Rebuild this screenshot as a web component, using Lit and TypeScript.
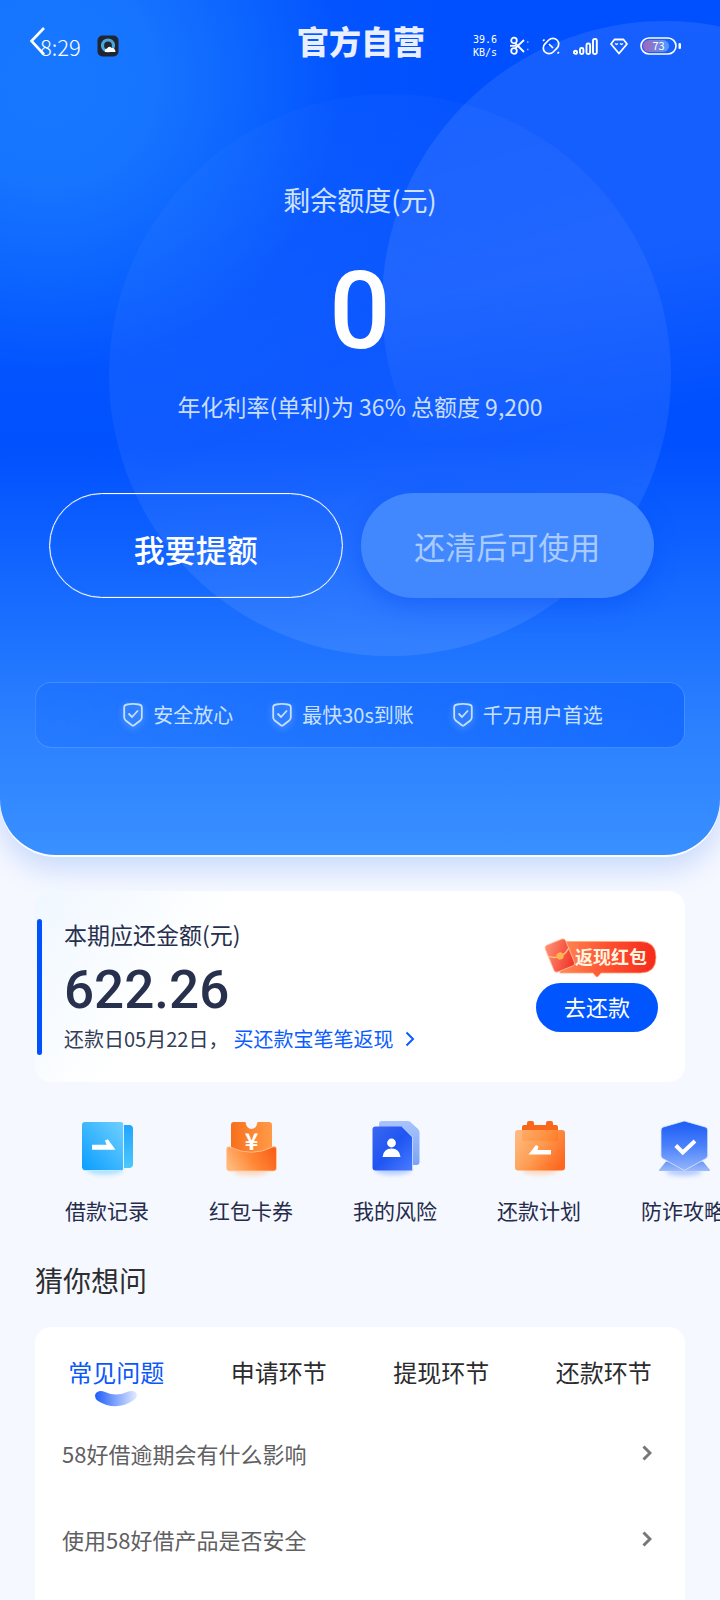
import { LitElement, html, svg, css, nothing } from "lit";
import { customElement, state } from "lit/decorators.js";

const shieldIcon = html`<svg class="shield" viewBox="0 0 20 24" aria-hidden="true">
  <path d="M4 1.500Q10 .4 16 1.500q2.800.4 2.800 2.800v10q0 2-1.500 3.200l-6.200 4.800q-1.100.8-2.200 0l-6.200-4.800Q1.200 16.300 1.200 14.300v-10Q1.200 1.900 4 1.500z"
    fill="none" stroke="#c4e0ff" stroke-width="1.800" />
  <path d="M5.500 10.500l3.500 3.500 6-6.500" fill="none" stroke="#c4e0ff" stroke-width="1.800" />
</svg>`;

const chevron = (cls: string) => html`<svg class=${cls} viewBox="0 0 10 16" aria-hidden="true">
  <path d="M1.500 1.500L8 8l-6.500 6.500" fill="none" stroke="currentColor" />
</svg>`;

const recordIcon = svg`
  <defs>
    <linearGradient id="g" x1="1" y1="0" x2="0" y2="1"><stop offset="0" stop-color="#6fd0ff"/><stop offset="1" stop-color="#0a9dff"/></linearGradient>
    <linearGradient id="h" x1="0" y1="0" x2="0" y2="1"><stop offset="0" stop-color="#22a4ff"/><stop offset="1" stop-color="#4cc8f8"/></linearGradient>
  </defs>
  <ellipse class="glow" cx="28" cy="54" rx="18" ry="5" fill="#7fd0ff"/>
  <rect x="40" y="9" width="16" height="43" rx="4" fill="url(#h)"/>
  <rect x="5" y="6" width="41.500" height="48.500" rx="3" fill="url(#g)"/>
  <path d="M46.500 8v45" stroke="#d8f2ff" stroke-width="1"/>
  <path d="M5 52q0 2.500 3 2.500h36" fill="none" stroke="#d8f2ff" stroke-width=".8"/>
  <path d="M15 28.700h14.700l-1.800-4.200 3-1.200L38.500 33.700H15z" fill="#fff"/>`;

const couponIcon = svg`
  <defs>
    <linearGradient id="g" x1="0" y1="0" x2="1" y2="0"><stop offset="0" stop-color="#f8701c"/><stop offset="1" stop-color="#ff9a48"/></linearGradient>
    <linearGradient id="h" x1="0" y1="0.600" x2="1" y2="0.300"><stop offset="0" stop-color="#ffb878"/><stop offset=".5" stop-color="#ff8634"/><stop offset="1" stop-color="#f9601a"/></linearGradient>
  </defs>
  <ellipse class="glow" cx="30" cy="55" rx="18" ry="4.500" fill="#ffc39a"/>
  <path d="M13 6h11.500q1 7 6 7t6-7H48q3 0 3 3v36H10V9q0-3 3-3z" fill="url(#g)"/>
  <text class="yen" x="30.500" y="34" text-anchor="middle">¥</text>
  <path d="M5.500 33q0-3 3-2.200 22 11 43.500 0 3.500-1 3.500 2v19.200q0 3-3 3h-44q-3 0-3-3z" fill="url(#h)" stroke="#ffd2ae" stroke-width=".7"/>`;

const riskIcon = svg`
  <defs>
    <linearGradient id="g" x1="0" y1="0" x2="1" y2="1"><stop offset="0" stop-color="#3c67f0"/><stop offset=".5" stop-color="#1f55f2"/><stop offset="1" stop-color="#4a7cff"/></linearGradient>
    <linearGradient id="h" x1="0" y1="0" x2="0" y2="1"><stop offset="0" stop-color="#a9c3fb"/><stop offset="1" stop-color="#7ba4f6"/></linearGradient>
  </defs>
  <ellipse class="glow" cx="28" cy="54" rx="18" ry="5" fill="#8fb0ff"/>
  <path d="M17 5h25.500q2 0 3.500 1.400l7 6.600q1.500 1.500 1.500 3.500v29.500q0 3-3 3H17q-3 0-3-3V8q0-3 3-3z" fill="url(#h)"/>
  <path d="M10.500 10.500H37L47.500 21v33.500h-37q-3 0-3-3v-38q0-3 3-3z" fill="url(#g)"/>
  <path d="M37 10.500L47.500 21v33" fill="none" stroke="#c9dafc" stroke-width=".9"/>
  <circle cx="26.500" cy="27" r="4.400" fill="#fff"/>
  <path d="M17.500 41q1-8.500 9-8.500t9 8.500z" fill="#fff"/>`;

const planIcon = svg`
  <defs>
    <linearGradient id="g" x1="0" y1="0.200" x2="1" y2="0.700"><stop offset="0" stop-color="#ffb473"/><stop offset=".5" stop-color="#ff9240"/><stop offset="1" stop-color="#ff5c0c"/></linearGradient>
  </defs>
  <ellipse class="glow" cx="31" cy="54" rx="18" ry="5" fill="#ffc39a"/>
  <path d="M15 9h3V7q0-2 2-2h3q2 0 2 2v2h12V7q0-2 2-2h3q2 0 2 2v2h3q2 0 2 2v14H13V11q0-2 2-2z" fill="#f9671c"/>
  <rect x="6" y="14" width="50" height="40.500" rx="3" fill="url(#g)" fill-opacity=".92"/>
  <path d="M19.500 38.500l7.500-9.500 2.500 1.500-1 3.500H42v4.500z" fill="#fff"/>`;

const guardIcon = svg`
  <defs>
    <linearGradient id="g" x1="0" y1="0" x2="0" y2="1"><stop offset="0" stop-color="#1b5cf5"/><stop offset=".5" stop-color="#4a80fb"/><stop offset="1" stop-color="#93b6fb"/></linearGradient>
    <linearGradient id="h" x1="0" y1="0" x2="0" y2="1"><stop offset="0" stop-color="#6a95f8"/><stop offset="1" stop-color="#9cbcf8"/></linearGradient>
  </defs>
  <ellipse class="glow" cx="31" cy="56" rx="18" ry="4" fill="#8fb0ff"/>
  <path d="M13 45.500h37l7 8.500q.5 1-1 1H7q-1.500 0-1-1z" fill="url(#h)"/>
  <path d="M31.300 5l21 6q2.400.7 2.400 3v25.500q0 2-1.700 3L31.300 54.500 9.700 42.500q-1.700-1-1.700-3V14q0-2.300 2.400-3z" fill="url(#g)" stroke="#dbe7ff" stroke-width=".8"/>
  <path d="M22.800 29.500l7 7L42 25" fill="none" stroke="#fff" stroke-width="4"/>`;

@customElement("shortcut-tile")
class ShortcutTile extends LitElement {
  static properties = { label: {}, icon: { attribute: false } };
  declare label: string;
  declare icon: unknown;

  static styles = css`
    :host { display: block; }
    .tile {
      display: flex;
      flex-direction: column;
      align-items: center;
      gap: 20px;
      text-decoration: none;
      color: #252b4a;
      font: 400 21px/28px "Noto Sans CJK SC", sans-serif;
      white-space: nowrap;
    }
    .pic { width: 60px; height: 60px; overflow: visible; }
    .glow { filter: blur(2px); opacity: .6; }
    .yen { font: 700 23px "Noto Sans CJK SC", sans-serif; fill: #fff; }
  `;

  render() {
    return html`<a class="tile" href="#">
      <svg class="pic" viewBox="0 0 60 60" aria-hidden="true">${this.icon}</svg>
      <span>${this.label}</span>
    </a>`;
  }
}

@customElement("app-root")
class AppRoot extends LitElement {
  @state() private tab = 0;

  private tabs = ["常见问题", "申请环节", "提现环节", "还款环节"];
  private questions = ["58好借逾期会有什么影响", "使用58好借产品是否安全"];
  private perks = ["安全放心", "最快30s到账", "千万用户首选"];
  private shortcuts = [
    { label: "借款记录", icon: recordIcon },
    { label: "红包卡券", icon: couponIcon },
    { label: "我的风险", icon: riskIcon },
    { label: "还款计划", icon: planIcon },
    { label: "防诈攻略", icon: guardIcon },
  ];

  static styles = css`
    :host {
      display: flex;
      flex-direction: column;
      min-height: 100vh;
      background: #f5f8ff;
      font-family: "Noto Sans CJK SC", sans-serif;
      color: #262f4c;
      overflow: hidden;
    }
    button { border: 0; padding: 0; background: none; font: inherit; color: inherit; cursor: pointer; }
    a { text-decoration: none; color: inherit; }
    h1, h2, p, ul { margin: 0; padding: 0; font-weight: 400; list-style: none; }

    .hero {
      position: relative;
      display: flex;
      flex-direction: column;
      align-items: center;
      padding-bottom: 107px;
      color: #fff;
      border-radius: 0 0 56px 56px;
      box-shadow: 0 2px 0 #fff, 0 14px 28px rgba(40, 110, 240, .22);
      background:
        radial-gradient(circle at 50px 80px, #1877ff 0, rgba(23, 118, 255, .97) 100px, rgba(18, 110, 255, .75) 190px, rgba(8, 92, 255, .35) 290px, rgba(0, 80, 255, 0) 400px),
        linear-gradient(180deg, #0050ff 0, #0050ff 52%, #1468ff 68%, #2a7fff 84%, #3990ff 100%);
    }
    .orbs { position: absolute; inset: 0; width: 100%; height: 100%; border-radius: inherit; }
    .bar, .limit, .amount, .rate, .actions, .perks { position: relative; }

    .bar {
      align-self: stretch;
      display: grid;
      grid-template-columns: 1fr auto 1fr;
      align-items: center;
      height: 92px;
      padding: 0 38px 0 40px;
    }
    .back { position: absolute; left: 28px; top: 25px; width: 18px; height: 32px; }
    .back svg { display: block; width: 18px; height: 32px; }
    .clock { display: flex; align-items: center; gap: 16px; font: 300 22px/24px "Noto Sans CJK SC", sans-serif; }
    .app { width: 22px; height: 22px; }
    .logo {
      padding-bottom: 12px;
      font-size: 32px;
      line-height: 36px;
      font-weight: 900;
      color: #e9efff;
    }
    .signals { display: flex; align-items: center; justify-content: flex-end; gap: 12px; }
    .signals svg { display: block; flex: none; }
    .speed { display: grid; gap: 1px; font: 300 10px/12px "DejaVu Sans Mono", monospace; }
    .battery { font: 400 11px "Noto Sans CJK SC", sans-serif; fill: #fff; }

    .limit { margin-top: 90px; font-size: 27px; line-height: 36px; color: #cfe2ff; }
    .amount { margin-top: 39px; font: 500 108px/108px Roboto, sans-serif; }
    .rate { margin-top: 26px; font-size: 23px; line-height: 30px; color: #c8deff; }
    .actions {
      align-self: stretch;
      display: grid;
      grid-template-columns: 1fr 1fr;
      gap: 18px;
      margin-top: 72px;
      padding: 0 66px 0 49px;
    }
    .cta { height: 105px; border-radius: 53px; font-size: 31px; line-height: 40px; }
    .raise { border: 1px solid #fff; box-shadow: inset 0 0 1px #fff; font-weight: 500; padding-top: 6px; }
    .locked { background: #4188ff; color: #a9cbff; box-shadow: 0 8px 24px rgba(0, 70, 240, .4); }
    .perks {
      align-self: stretch;
      display: flex;
      justify-content: center;
      align-items: center;
      gap: 39px;
      height: 66px;
      box-sizing: border-box;
      margin: 84px 35px 0;
      padding-left: 6px;
      border: 1px solid rgba(120, 180, 255, .4);
      border-radius: 16px;
      background: linear-gradient(90deg, rgba(20, 105, 255, .3), rgba(10, 95, 255, .6));
      color: #c9e1ff;
      font-size: 20px;
      line-height: 28px;
    }
    .perk { display: flex; align-items: center; gap: 10px; white-space: nowrap; }
    .shield { width: 20px; height: 24px; filter: drop-shadow(0 2px 3px rgba(190, 220, 255, .5)); }

    .bill {
      position: relative;
      display: flex;
      justify-content: space-between;
      align-items: center;
      margin: 36px 35px 0;
      padding: 28px 27px 29px 29px;
      border-radius: 16px;
      background: linear-gradient(125deg, #eff7ff 0, #fff 26%);
    }
    .bill::before {
      content: "";
      position: absolute;
      left: 2px;
      top: 28px;
      bottom: 27px;
      width: 5px;
      border-radius: 3px;
      background: #0052ff;
    }
    .bill-title { font-size: 23px; line-height: 30px; }
    .due { margin: 11px 0 5px; font: 500 53px/60px Roboto, sans-serif; color: #27304d; }
    .date { display: flex; align-items: center; font-size: 20px; line-height: 28px; color: #333c55; white-space: nowrap; }
    .promo { display: flex; align-items: center; gap: 12px; margin-left: 5px; color: #0a5cff; }
    .small { width: 10px; height: 16px; stroke-width: 2px; }
    .pay { display: flex; flex-direction: column; align-items: flex-end; gap: 5px; padding-bottom: 2px; }
    .tag { position: relative; display: flex; align-items: flex-start; width: 114px; height: 40px; }
    .tag svg { position: absolute; inset: 0; width: 114px; height: 40px; }
    .tag span { position: relative; margin: 4px 0 0 31px; font-size: 18px; line-height: 28px; font-weight: 700; color: #fff6e2; }
    .go { width: 122px; height: 49px; border-radius: 25px; background: #0055ff; color: #fff; font-size: 22px; line-height: 28px; padding-bottom: 4px; }

    .shortcuts { display: flex; margin: 34px 0 0 35px; overflow: hidden; padding-bottom: 2px; }
    .shortcuts shortcut-tile { flex: 0 0 144px; }

    .heading { margin: 36px 35px 0; font-size: 28px; line-height: 36px; color: #2d2d2f; }
    .faq { flex: 1; margin: 29px 35px 0; padding: 29px 0 0; border-radius: 16px 16px 0 0; background: #fff; }
    .tabs { display: grid; grid-template-columns: repeat(4, 1fr); align-items: start; }
    .tab { display: flex; flex-direction: column; align-items: center; gap: 2px; font-size: 24px; line-height: 32px; color: #2b2b2d; }
    .tab[aria-selected="true"] { color: #0a58f8; }
    .smile { width: 44px; height: 17px; }
    .list { margin-top: 3px; }
    .row {
      display: flex;
      justify-content: space-between;
      align-items: center;
      height: 86px;
      padding: 0 33px 0 27px;
      font-size: 22px;
      line-height: 30px;
      color: #606062;
    }
    .arrow { width: 10px; height: 16px; color: #77777a; stroke-width: 3px; }
  `;

  render() {
    return html`
      <section class="hero">
        <svg class="orbs" viewBox="0 0 720 855" preserveAspectRatio="xMidYMid slice" aria-hidden="true">
          <defs>
            <linearGradient id="o1" x1="0" y1="0" x2=".3" y2="1">
              <stop offset="0" stop-color="#fff" stop-opacity=".01" />
              <stop offset=".5" stop-color="#fff" stop-opacity=".05" />
              <stop offset="1" stop-color="#fff" stop-opacity=".09" />
            </linearGradient>
            <linearGradient id="o2" x1=".2" y1="0" x2=".35" y2="1">
              <stop offset="0" stop-color="#fff" stop-opacity=".09" />
              <stop offset=".45" stop-color="#fff" stop-opacity=".08" />
              <stop offset=".72" stop-color="#fff" stop-opacity="0" />
            </linearGradient>
          </defs>
          <circle cx="390" cy="375" r="281" fill="url(#o1)" />
          <circle cx="665" cy="304" r="283" fill="url(#o2)" />
        </svg>

        <header class="bar">
          <div class="clock">
            <span>8:29</span>
            <svg class="app" viewBox="0 0 22 22" aria-hidden="true">
              <rect x=".5" y=".5" width="21" height="21" rx="5" fill="#1f2632" />
              <circle cx="11" cy="10.500" r="5.500" fill="none" stroke="#4aa6dc" stroke-width="3.200" />
              <path d="M8 17q-1-3 2-3.500 2-3 4.500-.5 3.500-.5 4 4z" fill="#fff" />
            </svg>
          </div>
          <h1 class="logo">官方自营</h1>
          <div class="signals">
            <div class="speed"><span>39.6</span><span>KB/s</span></div>
            <svg width="20" height="20" viewBox="0 0 20 20" fill="none" stroke="#fff" stroke-width="1.800" aria-hidden="true">
              <path d="M6.500 7.500L15 16M6.500 12L15 4" />
              <circle cx="5" cy="4.500" r="2.800" /><circle cx="5" cy="15" r="2.800" />
              <path d="M1 9.800h6" /><path d="M18 6h1.500M18 13.500h1.500" stroke-width="1.500" opacity=".6" />
            </svg>
            <svg width="20" height="20" viewBox="0 0 20 20" fill="none" stroke="#fff" stroke-width="1.700" aria-hidden="true">
              <rect x="1.500" y="4.200" width="17" height="11.600" rx="5.800" transform="rotate(-45 10 10)" />
              <path d="M8 8l4 4M2 5l1.500-1.500M16.500 17.500l1.500-1.500" />
            </svg>
            <svg width="25" height="17" viewBox="0 0 25 17" fill="none" stroke="#fff" stroke-width="1.900" aria-hidden="true">
              <circle cx="2.500" cy="14.300" r="1.600" /><rect x="7" y="10" width="3.400" height="6" rx="1.500" />
              <rect x="13.500" y="5.500" width="3.600" height="10.500" rx="1.500" /><rect x="20" y="1" width="3.800" height="15" rx="1.500" />
            </svg>
            <svg width="18" height="17" viewBox="0 0 18 17" fill="none" stroke="#fff" stroke-width="1.800" stroke-linejoin="round" aria-hidden="true">
              <path d="M4.500 1.500h9L17 6l-8 9.500L1 6z" /><path d="M5 5.500l1.500 1L8 5.500M10 5.500l1.500 1L13 5.500" stroke-width="1.300" />
            </svg>
            <svg width="42" height="18" viewBox="0 0 42 18" role="img" aria-label="73%">
              <defs><linearGradient id="b" x1="0" x2="1"><stop offset="0" stop-color="#a565b8" /><stop offset="1" stop-color="#4d9bff" /></linearGradient></defs>
              <rect x="3" y="3" width="26" height="12" rx="6" fill="url(#b)" />
              <rect x="1" y="1" width="35" height="16" rx="8" fill="none" stroke="#fff" stroke-width="1.600" />
              <rect x="38.500" y="6" width="2.500" height="6" rx="1.200" fill="#fff" />
              <text class="battery" x="18.500" y="13" text-anchor="middle">73</text>
            </svg>
          </div>
          <button class="back" aria-label="返回">
            <svg viewBox="0 0 18 32" aria-hidden="true"><path d="M16 3L3.500 16 16 29.500" fill="none" stroke="#fff" stroke-width="2.600" /></svg>
          </button>
        </header>

        <p class="limit">剩余额度(元)</p>
        <p class="amount">0</p>
        <p class="rate">年化利率(单利)为 36% 总额度 9,200</p>
        <div class="actions">
          <button class="cta raise">我要提额</button>
          <button class="cta locked">还清后可使用</button>
        </div>
        <ul class="perks">
          ${this.perks.map((p) => html`<li class="perk">${shieldIcon}<span>${p}</span></li>`)}
        </ul>
      </section>

      <section class="bill">
        <div>
          <p class="bill-title">本期应还金额(元)</p>
          <p class="due">622.26</p>
          <p class="date">还款日05月22日，<a class="promo" href="#">买还款宝笔笔返现${chevron("small")}</a></p>
        </div>
        <div class="pay">
          <div class="tag">
            <svg viewBox="0 0 114 40" aria-hidden="true">
              <defs>
                <linearGradient id="t" x1="0" x2="1"><stop offset="0" stop-color="#ff8a55" /><stop offset=".5" stop-color="#ff5030" /><stop offset="1" stop-color="#f52a1c" /></linearGradient>
                <linearGradient id="e" x1="0" y1="0" x2="1" y2="1"><stop offset="0" stop-color="#ff9478" /><stop offset="1" stop-color="#f02d22" /></linearGradient>
              </defs>
              <path d="M16 3.500h80.500q15.500 0 15.500 15.700T96.500 35H57l-3 3.500q-1 1-2 0L49 35H16z" fill="url(#t)" stroke="#ffab80" stroke-width=".8" />
              <g transform="rotate(-22 16 18)">
                <rect x="5" y="3" width="22" height="29" rx="3" fill="url(#e)" stroke="#ffc09a" stroke-width=".8" />
                <path d="M5 14q11 9 22 0" fill="none" stroke="#ffc27a" stroke-width="1.400" />
                <circle cx="16" cy="18" r="3.600" fill="#ffb450" />
              </g>
            </svg>
            <span>返现红包</span>
          </div>
          <button class="go">去还款</button>
        </div>
      </section>

      <nav class="shortcuts">
        ${this.shortcuts.map((s) => html`<shortcut-tile .label=${s.label} .icon=${s.icon}></shortcut-tile>`)}
      </nav>

      <h2 class="heading">猜你想问</h2>
      <section class="faq">
        <div class="tabs" role="tablist">
          ${this.tabs.map((t, i) => html`
            <button class="tab" role="tab" aria-selected=${i === this.tab} @click=${() => (this.tab = i)}>
              ${t}
              ${i === this.tab
                ? html`<svg class="smile" viewBox="0 0 44 17" aria-hidden="true">
                    <defs><linearGradient id="s" x1="0" x2="1"><stop offset="0" stop-color="#1f5dfa" /><stop offset="1" stop-color="#e3ecff" /></linearGradient></defs>
                    <path d="M6 1q3 0 5 1 11 5 22 0 2-1 5-1 4 0 5 4 0 3-3 5-18 12-36 1-3-2-3-5 0-4 5-5z" fill="url(#s)" />
                  </svg>`
                : nothing}
            </button>`)}
        </div>
        <div class="list">
          ${this.questions.map((q) => html`<a class="row" href="#"><span>${q}</span>${chevron("arrow")}</a>`)}
        </div>
      </section>
    `;
  }
}
